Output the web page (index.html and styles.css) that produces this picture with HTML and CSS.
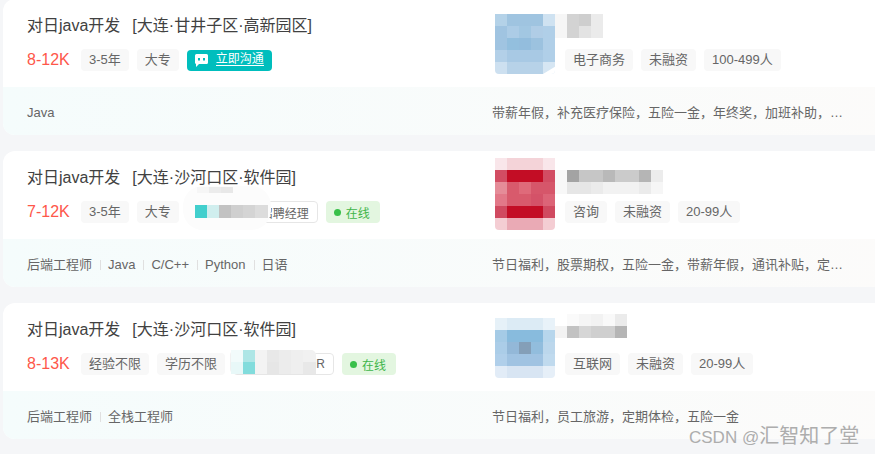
FILE: index.html
```html
<!DOCTYPE html>
<html lang="en">
<head>
    <meta charset="UTF-8">
    <meta name="viewport" content="width=device-width, initial-scale=1.0">
    <title>Job List</title>
    <link rel="stylesheet" href="styles.css">
</head>
<body>
    <ul class="job-list">
        <li class="job-card">
            <div class="job-top">
                <div class="job-info">
                    <h3 class="job-title"><span>对日java开发</span><span>[大连·甘井子区·高新园区]</span></h3>
                    <div class="job-meta">
                        <span class="salary">8-12K</span>
                        <span class="tag">3-5年</span>
                        <span class="tag">大专</span>
                        <a class="chat-btn" href="#">
                            <svg width="13" height="13" viewBox="0 0 13 13"><path fill="#fff" d="M1.5 0h10A1.5 1.5 0 0 1 13 1.500v7a1.500 1.500 0 0 1-1.500 1.500H4L1 13V10A1.500 1.500 0 0 1 0 8.500v-7A1.500 1.500 0 0 1 1.500 0z"/><rect x="3" y="4" width="2" height="2.500" fill="#00bebd"/><rect x="8" y="4" width="2" height="2.500" fill="#00bebd"/></svg>
                            <span>立即沟通</span>
                        </a>
                    </div>
                </div>
                <div class="company">
                    <svg class="logo" width="60" height="60" viewBox="0 0 5 5" shape-rendering="crispEdges">
                        <path fill="#b4d2e8" d="M0 0h1v1H0z"/><path fill="#9fc4e0" d="M1 0h3v1H1z"/><path fill="#cfe2f1" d="M4 0h1v1H4z"/>
                        <path fill="#a0c4e1" d="M0 1h1v2H0z"/><path fill="#accce6" d="M1 1h1v1H1z"/><path fill="#a2c7e2" d="M2 1h1v1H2z"/><path fill="#b0cde6" d="M3 1h1v1H3z"/><path fill="#b0cfe8" d="M4 1h1v3H4z"/>
                        <path fill="#93bfde" d="M1 2h1v1H1z"/><path fill="#93bddd" d="M2 2h1v1H2z"/><path fill="#9cc2df" d="M3 2h1v1H3z"/>
                        <path fill="#b3d0e8" d="M0 3h1v1H0z"/><path fill="#a8c9e4" d="M1 3h3v1H1z"/>
                        <path fill="#cde0f0" d="M0 4h1v1H0z"/><path fill="#b7d2e8" d="M1 4h3v1H1z"/><path fill="#d6e6f3" d="M4 4h1v1H4z"/>
                        <path fill="#fff" d="M5 4.400L4 5h1z" shape-rendering="auto"/>
                    </svg>
                    <div class="company-info">
                        <div class="company-name">
                            <svg width="48" height="24" viewBox="0 0 4 2" shape-rendering="crispEdges">
                                <path fill="#f6f6f6" d="M0 0h1v2H0z"/><path fill="#d3d3d3" d="M1 0h1v2H1z"/><path fill="#cecece" d="M2 0h1v1H2z"/><path fill="#e3e3e3" d="M2 1h1v1H2z"/><path fill="#ebebeb" d="M3 0h1v2H3z"/>
                            </svg>
                        </div>
                        <div class="company-tags">
                            <span class="tag">电子商务</span>
                            <span class="tag">未融资</span>
                            <span class="tag">100-499人</span>
                        </div>
                    </div>
                </div>
            </div>
            <div class="job-bottom">
                <div class="skills"><span>Java</span></div>
                <div class="welfare">带薪年假，补充医疗保险，五险一金，年终奖，加班补助，…</div>
            </div>
        </li>

        <li class="job-card">
            <div class="job-top">
                <div class="job-info">
                    <h3 class="job-title"><span>对日java开发</span><span>[大连·沙河口区·软件园]</span></h3>
                    <div class="job-meta">
                        <span class="salary">7-12K</span>
                        <span class="tag">3-5年</span>
                        <span class="tag">大专</span>
                        <span class="recruiter recruiter-wide">招聘经理
                            <svg class="blur-patch blur-one" width="88" height="44" viewBox="0 0 88 44">
                                <rect width="88" height="44" rx="20" fill="#fcfcfc"/>
                                <g shape-rendering="crispEdges">
                                    <path fill="#f6f6f6" d="M14 1h12v6H14z"/><path fill="#ececec" d="M26 1h12v6H26z"/><path fill="#e8e8e8" d="M38 1h12v6H38z"/>
                                    <path fill="#42cfcd" d="M12 19h12v13H12z"/><path fill="#d0eeee" d="M24 19h12v13H24z"/><path fill="#c2c2c2" d="M36 19h12v13H36z"/><path fill="#cfcfcf" d="M48 19h12v13H48z"/><path fill="#d4d4d4" d="M60 19h12v13H60z"/><path fill="#dcdcdc" d="M72 19h13v13H72z"/>
                                </g>
                            </svg>
                        </span>
                        <span class="online"><i></i>在线</span>
                    </div>
                </div>
                <div class="company">
                    <svg class="logo logo-tall" width="60" height="72" viewBox="0 0 5 6" shape-rendering="crispEdges">
                        <path fill="#f9e6ea" d="M0 0h1v1H0z"/><path fill="#f4d3d8" d="M1 0h3v1H1z"/><path fill="#f9e6ea" d="M4 0h1v1H4z"/>
                        <path fill="#d24d63" d="M0 1h1v1H0z"/><path fill="#c30d25" d="M1 1h3v1H1z"/><path fill="#d24d63" d="M4 1h1v1H4z"/>
                        <path fill="#e58c98" d="M0 2h1v1H0z"/><path fill="#d85a6c" d="M1 2h1v1H1z"/><path fill="#df6a7a" d="M2 2h1v1H2z"/><path fill="#d6566a" d="M3 2h2v1H3z"/>
                        <path fill="#e27888" d="M0 3h1v1H0z"/><path fill="#d85a6c" d="M1 3h2v1H1z"/><path fill="#d45268" d="M3 3h1v1H3z"/><path fill="#dc6477" d="M4 3h1v1H4z"/>
                        <path fill="#d04a60" d="M0 4h1v1H0z"/><path fill="#c30d25" d="M1 4h3v1H1z"/><path fill="#d04a60" d="M4 4h1v1H4z"/>
                        <path fill="#f4cdd3" d="M0 5h1v1H0z"/><path fill="#eaaab5" d="M1 5h3v1H1z"/><path fill="#f4cdd3" d="M4 5h1v1H4z"/>
                    </svg>
                    <div class="company-info">
                        <div class="company-name name-low">
                            <svg width="108" height="24" viewBox="0 0 9 2" shape-rendering="crispEdges">
                                <path fill="#f8f8f8" d="M0 0h1v2H0z"/><path fill="#a3a3a3" d="M1 0h1v1H1z"/><path fill="#c6c6c6" d="M2 0h2v1H2z"/><path fill="#b9b9b9" d="M4 0h1v1H4z"/><path fill="#cbcbcb" d="M5 0h2v1H5z"/><path fill="#b5b5b5" d="M7 0h1v1H7z"/><path fill="#ececec" d="M8 0h1v1H8z"/>
                                <path fill="#e6e6e6" d="M1 1h2v1H1z"/><path fill="#ebebeb" d="M3 1h1v1H3z"/><path fill="#f2f2f2" d="M4 1h3v1H4z"/><path fill="#ebebeb" d="M7 1h1v1H7z"/><path fill="#f6f6f6" d="M8 1h1v1H8z"/>
                            </svg>
                        </div>
                        <div class="company-tags">
                            <span class="tag">咨询</span>
                            <span class="tag">未融资</span>
                            <span class="tag">20-99人</span>
                        </div>
                    </div>
                </div>
            </div>
            <div class="job-bottom">
                <div class="skills"><span>后端工程师</span><span>Java</span><span>C/C++</span><span>Python</span><span>日语</span></div>
                <div class="welfare">节日福利，股票期权，五险一金，带薪年假，通讯补贴，定…</div>
            </div>
        </li>

        <li class="job-card">
            <div class="job-top">
                <div class="job-info">
                    <h3 class="job-title"><span>对日java开发</span><span>[大连·沙河口区·软件园]</span></h3>
                    <div class="job-meta">
                        <span class="salary">8-13K</span>
                        <span class="tag">经验不限</span>
                        <span class="tag">学历不限</span>
                        <span class="recruiter recruiter-hr">HR
                            <svg class="blur-patch blur-two" width="86" height="24" viewBox="0 0 86 24">
                                <rect width="86" height="24" rx="5" fill="#f1f1f1"/>
                                <g shape-rendering="crispEdges">
                                    <path fill="#f2fbfb" d="M1 0h12v12H1z"/><path fill="#e8f8f8" d="M1 12h12v12H1z"/>
                                    <path fill="#aee6e6" d="M13 0h12v12H13z"/><path fill="#82dcdc" d="M13 12h12v12H13z"/>
                                    <path fill="#f3f3f3" d="M25 0h12v24H25z"/>
                                    <path fill="#e8e8e8" d="M37 0h12v12H37z"/><path fill="#e6e6e6" d="M37 12h12v12H37z"/>
                                    <path fill="#ececec" d="M49 0h12v24H49z"/>
                                    <path fill="#efefef" d="M61 0h12v24H61z"/>
                                    <path fill="#e8e8e8" d="M73 12h13v12H73z"/>
                                </g>
                            </svg>
                        </span>
                        <span class="online"><i></i>在线</span>
                    </div>
                </div>
                <div class="company">
                    <svg class="logo" width="60" height="60" viewBox="0 0 5 5" shape-rendering="crispEdges">
                        <path fill="#e6f1f8" d="M0 0h1v1H0z"/><path fill="#dcebf5" d="M1 0h3v1H1z"/><path fill="#e8f2f9" d="M4 0h1v1H4z"/>
                        <path fill="#a5cbe6" d="M0 1h1v1H0z"/><path fill="#88bbdd" d="M1 1h3v1H1z"/><path fill="#b7d6ec" d="M4 1h1v1H4z"/>
                        <path fill="#abcde8" d="M0 2h1v1H0z"/><path fill="#93b8d8" d="M1 2h1v1H1z"/><path fill="#849fb8" d="M2 2h1v1H2z"/><path fill="#92bddd" d="M3 2h1v1H3z"/><path fill="#bcd7ec" d="M4 2h1v1H4z"/>
                        <path fill="#b0cfea" d="M0 3h1v1H0z"/><path fill="#a0c3e2" d="M1 3h3v1H1z"/><path fill="#c0daee" d="M4 3h1v1H4z"/>
                        <path fill="#e2ecf7" d="M0 4h1v1H0z"/><path fill="#d8e5f3" d="M1 4h3v1H1z"/><path fill="#e6eff8" d="M4 4h1v1H4z"/>
                    </svg>
                    <div class="company-info">
                        <div class="company-name name-high">
                            <svg width="72" height="24" viewBox="0 0 6 2" shape-rendering="crispEdges">
                                <path fill="#f3f3f3" d="M0 1h1v1H0z"/><path fill="#fafafa" d="M1 0h1v1H1z"/><path fill="#f5f5f5" d="M2 0h1v1H2z"/><path fill="#f2f2f2" d="M3 0h1v1H3z"/><path fill="#f9f9f9" d="M4 0h1v1H4z"/><path fill="#ebebeb" d="M5 0h1v1H5z"/>
                                <path fill="#c2c2c2" d="M1 1h1v1H1z"/><path fill="#d6d6d6" d="M2 1h1v1H2z"/><path fill="#cfcfcf" d="M3 1h2v1H3z"/><path fill="#b5b5b5" d="M5 1h1v1H5z"/>
                            </svg>
                        </div>
                        <div class="company-tags">
                            <span class="tag">互联网</span>
                            <span class="tag">未融资</span>
                            <span class="tag">20-99人</span>
                        </div>
                    </div>
                </div>
            </div>
            <div class="job-bottom">
                <div class="skills"><span>后端工程师</span><span>全栈工程师</span></div>
                <div class="welfare">节日福利，员工旅游，定期体检，五险一金</div>
            </div>
        </li>
    </ul>
    <div class="watermark">CSDN @<span>汇智知了堂</span></div>
</body>
</html>
```

FILE: styles.css
```css
* {
    margin: 0;
    padding: 0;
    box-sizing: border-box;
}

html, body {
    height: 100%;
    overflow: hidden;
}

body {
    position: relative;
    background-color: #f5f6f8;
    font-family: "Liberation Sans", "Noto Sans CJK SC", sans-serif;
    font-size: 13px;
    color: #666;
}

.job-list {
    list-style: none;
    display: flex;
    flex-direction: column;
    gap: 16px;
    width: 892px;
    margin: -1px 0 0 3px;
}

.job-card {
    background-color: white;
    border-radius: 12px;
    overflow: hidden;
}

.job-top {
    display: flex;
    height: 88px;
}

.job-info {
    width: 492px;
    padding: 16px 0 0 24px;
}

.job-title {
    display: flex;
    gap: 12px;
    font-size: 16px;
    font-weight: normal;
    line-height: 22px;
    color: #414141;
}

.job-meta {
    display: flex;
    align-items: center;
    gap: 8px;
    height: 22px;
    margin-top: 12px;
}

.salary {
    width: 46px;
    font-size: 16px;
    color: #fe574a;
}

.tag {
    display: inline-block;
    height: 22px;
    padding: 0 8px;
    line-height: 22px;
    background-color: #f8f8f8;
    border-radius: 4px;
    white-space: nowrap;
}

.chat-btn {
    display: flex;
    align-items: center;
    gap: 8px;
    width: 85px;
    height: 21px;
    margin-top: 1px;
    padding-left: 8px;
    background-color: #00bebd;
    border-radius: 4px;
    font-size: 12px;
    color: white;
    text-decoration: none;
}

.chat-btn span {
    margin-bottom: 2px;
    line-height: 12px;
    border-bottom: 1px solid white;
}

.recruiter {
    position: relative;
    display: flex;
    align-items: center;
    justify-content: flex-end;
    height: 22px;
    padding: 0 8px;
    background-color: white;
    border: 1px solid #e6e6e6;
    border-radius: 4px;
    font-size: 12px;
    white-space: nowrap;
}

.recruiter-wide {
    width: 131px;
}

.recruiter-hr {
    width: 101px;
}

.blur-patch {
    position: absolute;
}

.blur-one {
    left: -5px;
    top: -16px;
}

.blur-two {
    left: -4px;
    top: -4px;
}

.online {
    display: flex;
    align-items: center;
    gap: 5px;
    height: 22px;
    padding: 0 10px 0 8px;
    background-color: #e3f6e0;
    border-radius: 4px;
    font-size: 12px;
    color: #3fb54a;
}

.online i {
    width: 7px;
    height: 7px;
    background-color: #39c04a;
    border-radius: 50%;
}

.company {
    flex: 1;
    display: flex;
    gap: 10px;
    padding-top: 15px;
}

.logo {
    display: block;
    border-radius: 0 0 4px 4px;
}

.logo-tall {
    margin-top: -8px;
}

.company-info {
    height: 72px;
}

.company-name {
    height: 35px;
    margin-left: -10px;
}

.company-name svg {
    display: block;
}

.name-low {
    padding-top: 4px;
}

.name-high {
    height: 39px;
    margin-top: -4px;
}

.company-tags {
    display: flex;
    gap: 8px;
}

.job-bottom {
    display: flex;
    align-items: center;
    height: 48px;
    background: linear-gradient(90deg, #f5fcfc, #fcfbfa);
}

.skills {
    display: flex;
    align-items: baseline;
    width: 489px;
    margin-top: 4px;
    padding-left: 24px;
    line-height: 20px;
}

.skills span + span {
    margin-left: 8px;
    padding-left: 8px;
    background: linear-gradient(#e0e0e0, #e0e0e0) left center / 1px 10px no-repeat;
}

.welfare {
    white-space: nowrap;
}

.watermark {
    position: absolute;
    left: 689px;
    top: 422px;
    font-size: 17px;
    line-height: 28px;
    color: #adadad;
}

.watermark span {
    font-size: 20px;
}
```
